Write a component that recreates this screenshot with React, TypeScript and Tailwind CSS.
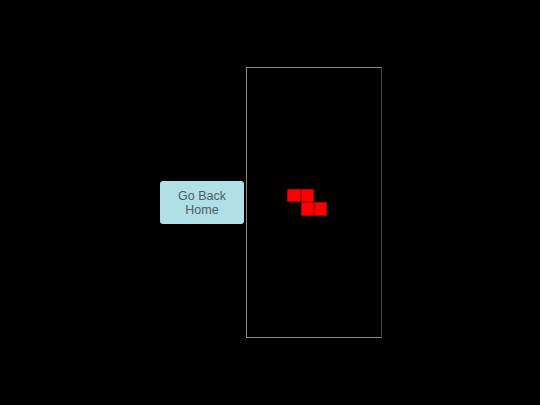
const COLS = 10;
const ROWS = 20;

// active piece (Z) as [col, row]
const piece: [number, number][] = [
  [3, 9],
  [4, 9],
  [4, 10],
  [5, 10],
];

function Board() {
  const filled = new Set(piece.map(([c, r]) => `${c}-${r}`));
  const cells = [];
  for (let r = 0; r < ROWS; r++) {
    for (let c = 0; c < COLS; c++) {
      const on = filled.has(`${c}-${r}`);
      cells.push(
        <div
          key={`${c}-${r}`}
          className={on ? 'bg-[#ff0000] border border-[#b00000]' : ''}
        />
      );
    }
  }
  return (
    <div className="w-[136px] h-[271px] border border-[#8a8a8a] border-r-[#444444] bg-black">
      <div className="grid grid-cols-[repeat(10,13.4px)] grid-rows-[repeat(20,13.45px)] w-full h-full">
        {cells}
      </div>
    </div>
  );
}

export default function App() {
  return (
    <div className="w-full h-screen bg-black flex items-center justify-center gap-[2px] pl-[2px] font-['Liberation_Sans',Arial,sans-serif]">
      <button className="w-[84px] h-[43px] rounded-[3px] bg-[#b0e0e6] text-[#4b5d63] text-[12.5px] leading-[14px] cursor-pointer">
        Go Back
        <br />
        Home
      </button>
      <Board />
    </div>
  );
}
